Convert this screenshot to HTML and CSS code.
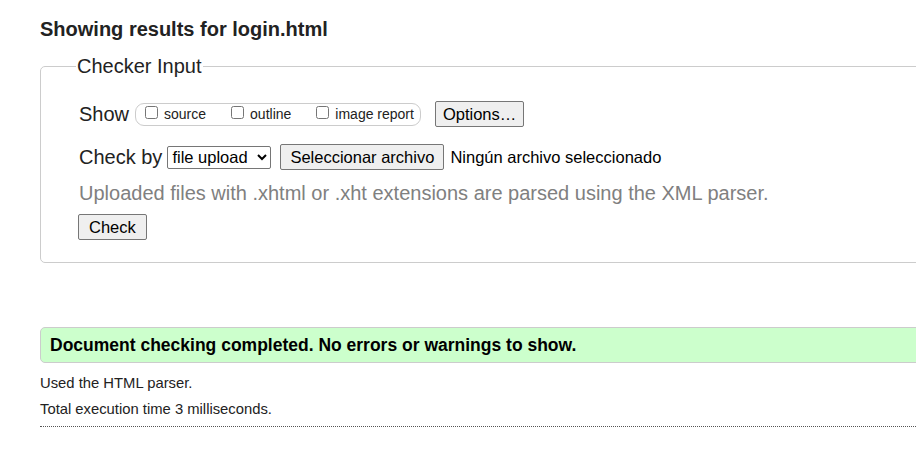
FILE: index.html
```html
<!DOCTYPE html>
<html>
<head>
<meta charset="utf-8">
<link rel="stylesheet" href="styles.css">
</head>
<body>
<div class="page">
  <h2 class="title">Showing results for login.html</h2>
  <fieldset class="checker">
    <legend class="legend">Checker Input</legend>
    <div class="row">
      <span class="label">Show</span>
      <span class="group">
        <label class="opt"><input type="checkbox"> source</label>
        <label class="opt"><input type="checkbox"> outline</label>
        <label class="opt"><input type="checkbox"> image report</label>
      </span>
      <button class="btn options">Options…</button>
    </div>
    <div class="row row2">
      <span class="label">Check by</span>
      <select class="sel"><option>file upload</option></select>
      <button class="btn file">Seleccionar archivo</button>
      <span class="none">Ningún archivo seleccionado</span>
    </div>
    <p class="hint">Uploaded files with .xhtml or .xht extensions are parsed using the XML parser.</p>
    <button class="btn check">Check</button>
  </fieldset>
  <p class="success">Document checking completed. No errors or warnings to show.</p>
  <p class="info">Used the HTML parser.</p>
  <p class="info">Total execution time 3 milliseconds.</p>
  <hr class="dots">
</div>
</body>
</html>
```
FILE: styles.css
```css
html, body {
  margin: 0;
  padding: 0;
  overflow: hidden;
  background: #fff;
}
body {
  font-family: "Liberation Sans", Arial, sans-serif;
  color: #222;
}
.page {
  padding-left: 40px;
  width: 1000px;
}
.title {
  margin: 0;
  padding-top: 17px;
  font-size: 20px;
  font-weight: bold;
  line-height: 24px;
  color: #222;
}
.checker {
  margin: 14px 0 0 0;
  border: 1px solid #ccc;
  border-radius: 5px;
  padding: 23px 38px 22px 38px;
}
.legend {
  font-size: 20px;
  padding: 0 1px;
  margin-left: -3px;
  color: #222;
}
.row {
  display: flex;
  align-items: center;
  height: 26px;
}
.row2 {
  margin-top: 17px;
}
.label {
  font-size: 20px;
  margin-right: 6px;
}
.row2 .label {
  margin-right: 5px;
}
.group {
  display: inline-flex;
  align-items: center;
  border: 1px solid #ccc;
  border-radius: 9px;
  height: 21px;
  padding: 0 6px 0 6px;
  font-size: 14px;
}
.opt {
  display: inline-flex;
  align-items: center;
  margin-right: 22px;
}
.opt:last-child {
  margin-right: 0;
}
.opt input {
  margin: 0 6px 4px 3px;
  width: 13px;
  height: 13px;
}
.btn {
  font-family: "Liberation Sans", Arial, sans-serif;
  font-size: 16.5px;
  background: #efefef;
  border: 1px solid #767676;
  border-radius: 2px;
  color: #000;
  padding: 1px 8px;
  height: 26px;
}
.options {
  margin-left: 14px;
  padding: 1px 7px;
}
.sel {
  font-family: "Liberation Sans", Arial, sans-serif;
  font-size: 16.5px;
  height: 23px;
  width: 104px;
  border: 1px solid #767676;
  border-radius: 2px;
  color: #000;
  background: #fff;
}
.file {
  margin-left: 9px;
  padding: 1px 9px;
}
.none {
  font-size: 16.5px;
  margin-left: 6px;
  color: #000;
}
.hint {
  margin: 11px 0 9px 0;
  font-size: 20px;
  color: #808080;
  line-height: 24px;
}
.check {
  margin-left: -1px;
  padding: 1px 10px;
}
.success {
  margin: 64px 0 0 0;
  background: #cfc;
  border: 1px solid #ccc;
  border-radius: 5px;
  padding: 6px 9px;
  font-weight: bold;
  font-size: 17.5px;
  line-height: 22px;
  color: #000;
}
.info {
  margin: 9px 0 0 0;
  font-size: 14.8px;
  line-height: 17px;
}
.success + .info {
  margin-top: 12px;
}
.dots {
  margin: 8px 0 0 0;
  border: 0;
  border-top: 1px dotted #555;
  height: 0;
}
```
